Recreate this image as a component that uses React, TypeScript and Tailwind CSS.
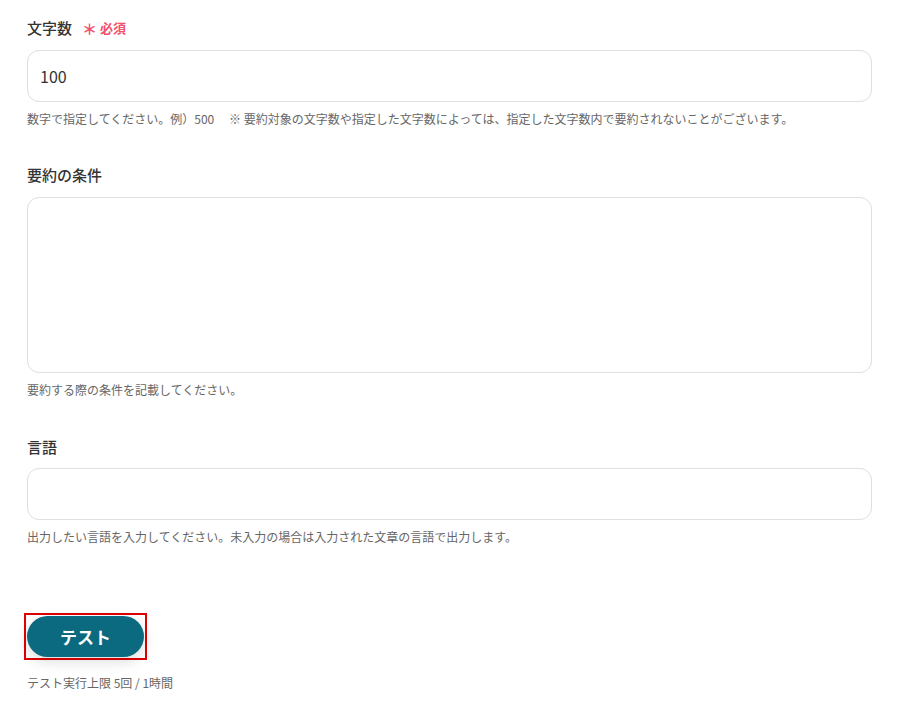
import React from 'react';

const font = { fontFamily: '"Noto Sans CJK JP", "Noto Sans", sans-serif' };

function Label({ text, required }: { text: string; required?: boolean }) {
  return (
    <div className="flex items-center h-[22px] gap-[10px]">
      <span className="text-[15px] font-medium text-[#333]">{text}</span>
      {required && (
        <span className="text-[13px] font-bold text-[#f2506e] flex items-center gap-[3px]">
          <span className="text-[15px] leading-none">＊</span>必須
        </span>
      )}
    </div>
  );
}

function Help({ children }: { children: React.ReactNode }) {
  return <p className="mt-2 h-[18px] leading-[18px] text-[12px] text-[#666]">{children}</p>;
}

export default function App() {
  return (
    <div className="bg-white min-h-[712px] px-[27px] pt-[17px] w-[899px]" style={font}>
      <Label text="文字数" required />
      <div className="mt-[11px] h-[52px] rounded-xl border border-[#dedee3] flex items-center px-3 text-[16px] text-[#333]">
        100
      </div>
      <Help>
        数字で指定してください。例）500　 ※ 要約対象の文字数や指定した文字数によっては、指定した文字数内で要約されないことがございます。
      </Help>

      <div className="mt-9">
        <Label text="要約の条件" />
        <div className="mt-[11px] h-[176px] rounded-xl border border-[#dedee3]" />
        <Help>要約する際の条件を記載してください。</Help>
      </div>

      <div className="mt-[37px]">
        <Label text="言語" />
        <div className="mt-[10px] h-[52px] rounded-xl border border-[#dedee3]" />
        <Help>出力したい言語を入力してください。未入力の場合は入力された文章の言語で出力します。</Help>
      </div>

      <div className="mt-[67px] -ml-[3px] inline-block border-2 border-[#e00000] p-[1px]">
        <button className="block w-[117px] h-[41px] rounded-full bg-[#0b6a80] text-white text-[17px] font-bold shadow-[0_4px_14px_rgba(0,0,0,0.15)]">
          テスト
        </button>
      </div>
      <p className="mt-[14px] text-[12px] text-[#666] leading-[18px]">テスト実行上限 5回 / 1時間</p>
    </div>
  );
}
